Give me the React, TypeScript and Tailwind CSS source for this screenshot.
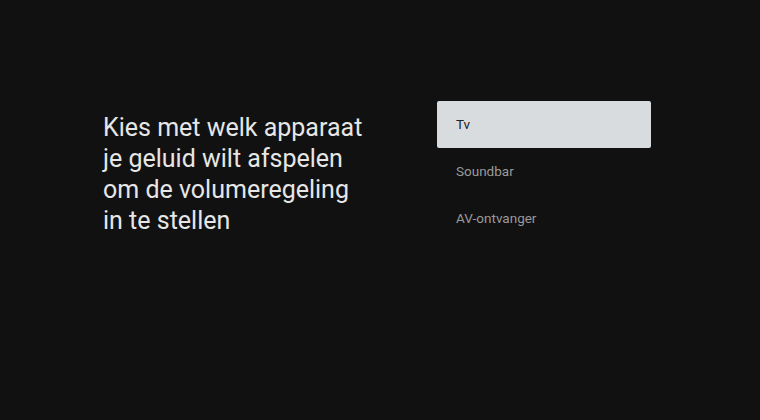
export default function App() {
  const options = ['Tv', 'Soundbar', 'AV-ontvanger'];
  return (
    <main className="flex h-[420px] w-[760px] bg-[#111111] pl-[103px] pt-[101px] font-['Roboto',sans-serif]">
      <div className="w-[334px] pt-[11px]">
        <h1 className="text-[25px] leading-[31px] font-normal text-[#e6e6e6]">
          Kies met welk apparaat
          <br />
          je geluid wilt afspelen
          <br />
          om de volumeregeling
          <br />
          in te stellen
        </h1>
      </div>
      <ul className="flex w-[214px] flex-col">
        {options.map((o, i) => (
          <li
            key={o}
            className={
              i === 0
                ? 'flex h-[47px] items-center rounded-[2px] bg-[#d9dcdf] px-[19px] text-[13.5px] text-[#202124]'
                : 'flex h-[47px] items-center px-[19px] text-[13.5px] text-[#9a9a9a]'
            }
          >
            {o}
          </li>
        ))}
      </ul>
    </main>
  );
}
